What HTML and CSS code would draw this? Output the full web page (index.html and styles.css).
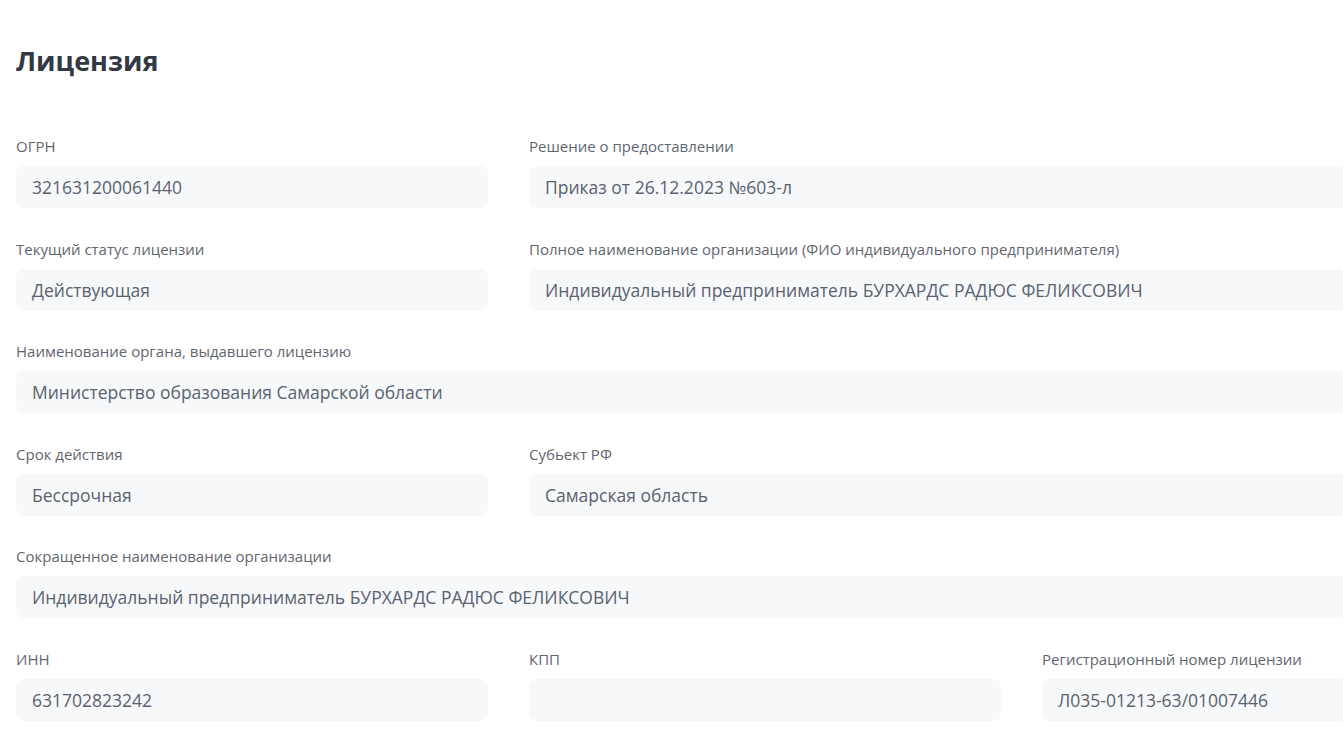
FILE: index.html
```html
<!DOCTYPE html>
<html lang="ru">
<head>
    <meta charset="UTF-8">
    <meta name="viewport" content="width=device-width, initial-scale=1.0">
    <title>Лицензия</title>
    <link rel="stylesheet" href="styles.css">
</head>
<body>
    <div class="page">
        <h1>Лицензия</h1>

        <div class="fields">
            <div class="field">
                <div class="label">ОГРН</div>
                <div class="value">321631200061440</div>
            </div>
            <div class="field wide">
                <div class="label">Решение о предоставлении</div>
                <div class="value">Приказ от 26.12.2023 №603-л</div>
            </div>

            <div class="field">
                <div class="label">Текущий статус лицензии</div>
                <div class="value">Действующая</div>
            </div>
            <div class="field wide">
                <div class="label">Полное наименование организации (ФИО индивидуального предпринимателя)</div>
                <div class="value">Индивидуальный предприниматель БУРХАРДС РАДЮС ФЕЛИКСОВИЧ</div>
            </div>

            <div class="field full">
                <div class="label">Наименование органа, выдавшего лицензию</div>
                <div class="value">Министерство образования Самарской области</div>
            </div>

            <div class="field">
                <div class="label">Срок действия</div>
                <div class="value">Бессрочная</div>
            </div>
            <div class="field wide">
                <div class="label">Субьект РФ</div>
                <div class="value">Самарская область</div>
            </div>

            <div class="field full">
                <div class="label">Сокращенное наименование организации</div>
                <div class="value">Индивидуальный предприниматель БУРХАРДС РАДЮС ФЕЛИКСОВИЧ</div>
            </div>

            <div class="field">
                <div class="label">ИНН</div>
                <div class="value">631702823242</div>
            </div>
            <div class="field">
                <div class="label">КПП</div>
                <div class="value"></div>
            </div>
            <div class="field">
                <div class="label">Регистрационный номер лицензии</div>
                <div class="value">Л035-01213-63/01007446</div>
            </div>
        </div>
    </div>
</body>
</html>
```

FILE: styles.css
```css
html, body {
    overflow: hidden;
}
body {
    margin: 0;
    padding: 0;
    background-color: #fff;
    font-family: 'Open Sans', 'Noto Sans', Arial, sans-serif;
    color: #5b6371;
}
.page {
    padding: 43px 16px 40px;
}
h1 {
    margin: 0 0 57px;
    font-size: 27px;
    line-height: 36px;
    font-weight: 700;
    color: #323844;
}
.fields {
    display: grid;
    grid-template-columns: repeat(3, 472px);
    column-gap: 41px;
    row-gap: 30.6px;
}
.field.wide {
    grid-column: span 2;
}
.field.full {
    grid-column: span 3;
}
.label {
    font-size: 15px;
    line-height: 20px;
    color: #5f6670;
    margin-bottom: 10px;
    white-space: nowrap;
}
.value {
    box-sizing: border-box;
    height: 42px;
    padding: 0 16px;
    display: flex;
    align-items: center;
    background-color: #f6f8fa;
    border-radius: 8px;
    font-size: 17.5px;
    color: #5a6270;
    white-space: nowrap;
}
```
